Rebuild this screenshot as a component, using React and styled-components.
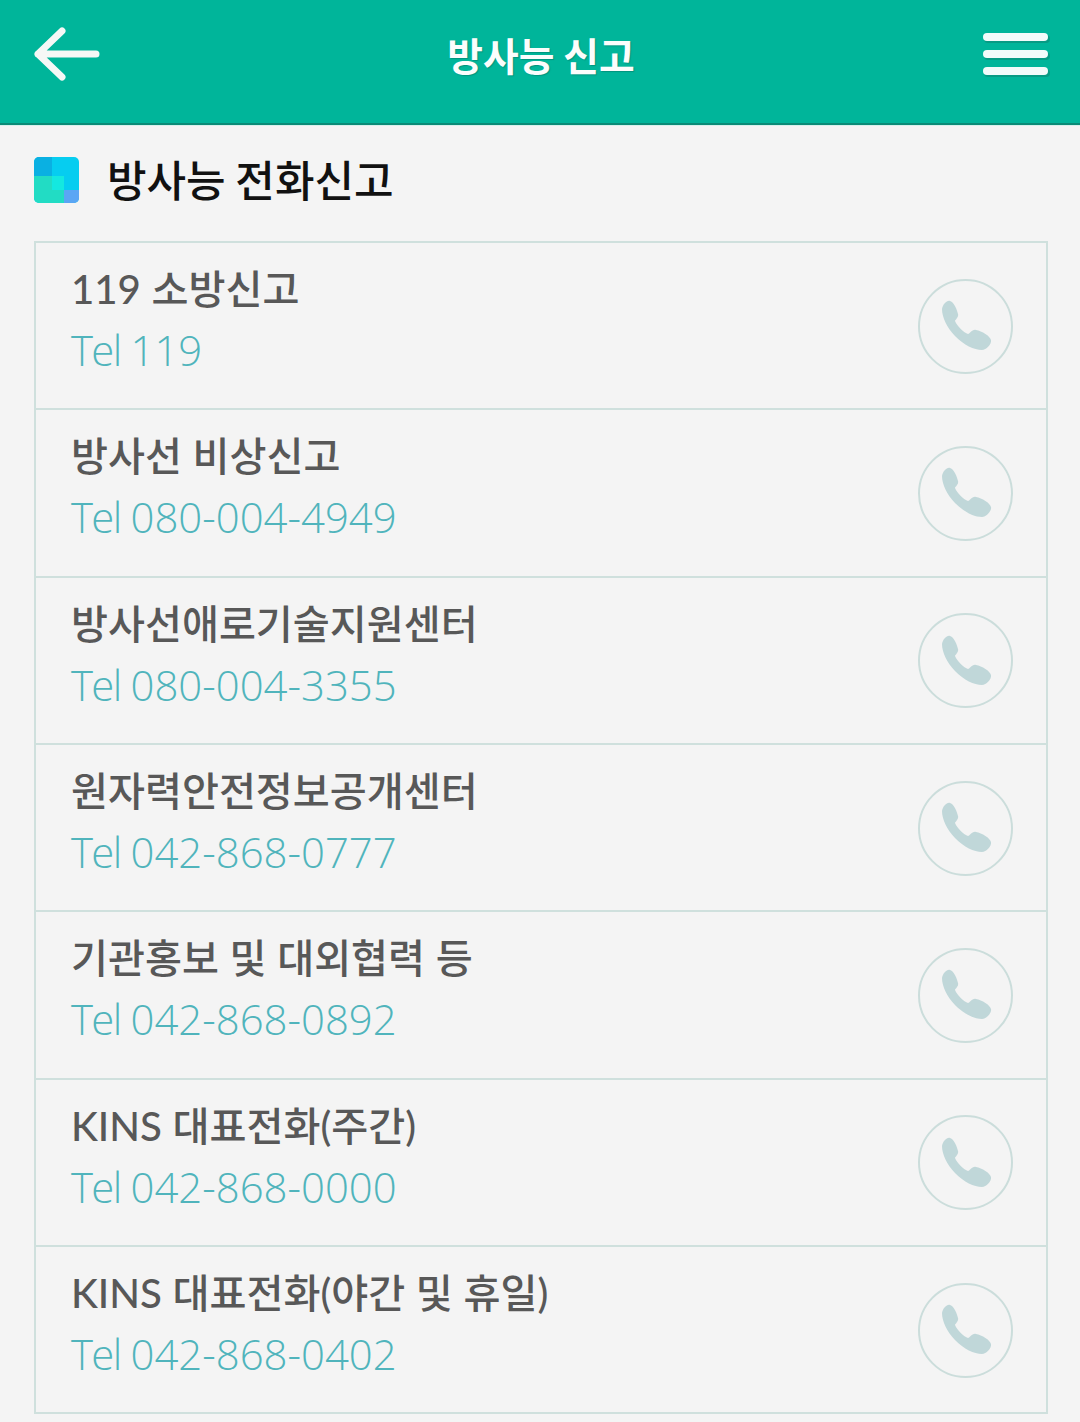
import React from 'react';
import styled, { createGlobalStyle } from 'styled-components';

const GlobalStyle = createGlobalStyle`
  html, body {
    margin: 0;
    padding: 0;
    background: #f4f4f4;
  }
  body {
    font-family: "Noto Sans CJK KR", "Noto Sans", sans-serif;
  }
`;

const Page = styled.div`
  width: 1080px;
  height: 1422px;
  overflow: hidden;
  background: #f4f4f4;
`;

const Header = styled.header`
  height: 125px;
  box-sizing: border-box;
  display: flex;
  align-items: center;
  justify-content: space-between;
  padding: 0 30px 15px 30px;
  background: #00b59a;
  border-bottom: 2px solid #0a8a76;
  box-shadow: 0 1px 0 #d8f0ec;
`;

const IconButton = styled.button`
  display: block;
  width: ${(p) => p.$w}px;
  height: 60px;
  padding: 0;
  border: 0;
  background: none;
`;

const HeaderTitle = styled.h1`
  margin: 0;
  color: #fbfdfc;
  font-size: 38.8px;
  font-weight: 700;
  line-height: 50px;
  text-shadow: 1px 1px 1px rgba(0, 90, 75, 0.35);
`;

const Section = styled.section`
  display: flex;
  align-items: center;
  gap: 28px;
  height: 116px;
  box-sizing: border-box;
  padding: 0 34px 10px;
`;

const SectionIcon = styled.svg`
  width: 45px;
  height: 46px;
  flex: none;
  margin-top: 4px;
`;

const SectionTitle = styled.h2`
  margin: 0;
  color: #111;
  font-size: 43px;
  font-weight: 500;
  line-height: 56px;
`;

const List = styled.ul`
  list-style: none;
  margin: 0 32px 0 34px;
  padding: 0;
  border: 2px solid #cfe0dd;
  border-bottom-width: 0;
`;

const Row = styled.li`
  display: flex;
  align-items: center;
  justify-content: space-between;
  height: 167.33px;
  box-sizing: border-box;
  padding: 1px 33px 0 35px;
  border-bottom: 2px solid #cfe0dd;
`;

const Texts = styled.div`
  display: flex;
  flex-direction: column;
  gap: 7px;
  padding-bottom: 13px;
`;

const Name = styled.div`
  color: #585858;
  font-family: Lato, "Noto Sans CJK KR", sans-serif;
  font-size: 40.2px;
  font-weight: 500;
  line-height: 54px;
  word-spacing: 0.5px;
`;

const Tel = styled.div`
  color: #50b4bc;
  font-family: "Open Sans", "Noto Sans", sans-serif;
  font-size: 41.9px;
  font-weight: 300;
  line-height: 54px;
`;

const TelLabel = styled.span`
  letter-spacing: -1.6px;
  margin-right: -1px;
`;

const CallButton = styled.div`
  width: 95px;
  height: 95px;
  box-sizing: border-box;
  display: flex;
  align-items: center;
  justify-content: center;
  border: 2px solid #cbdddb;
  border-radius: 50%;
`;

const PhoneIcon = styled.svg`
  width: 52px;
  height: 52px;
  fill: #c0d7d9;
`;

const contacts = [
  { name: '119 소방신고', tel: '119' },
  { name: '방사선 비상신고', tel: '080-004-4949' },
  { name: '방사선애로기술지원센터', tel: '080-004-3355' },
  { name: '원자력안전정보공개센터', tel: '042-868-0777' },
  { name: '기관홍보 및 대외협력 등', tel: '042-868-0892' },
  { name: 'KINS 대표전화(주간)', tel: '042-868-0000' },
  { name: 'KINS 대표전화(야간 및 휴일)', tel: '042-868-0402' },
];

const BackArrow = () => (
  <svg width="70" height="60" viewBox="0 0 70 60">
    <path
      d="M32 7 L8 30 L32 53 M8 30 H66"
      fill="none"
      stroke="#f6f8f6"
      strokeWidth="7"
      strokeLinecap="round"
      strokeLinejoin="round"
    />
  </svg>
);

const MenuBars = () => (
  <svg width="68" height="60" viewBox="0 0 68 60">
    <g fill="#0a8a76" opacity="0.6">
      <rect x="2" y="11" width="66" height="8" rx="4" />
      <rect x="2" y="28" width="66" height="8" rx="4" />
      <rect x="2" y="45" width="66" height="8" rx="4" />
    </g>
    <g fill="#f2fbfa">
      <rect x="1" y="9" width="65" height="8" rx="4" />
      <rect x="1" y="26" width="65" height="8" rx="4" />
      <rect x="1" y="43" width="65" height="8" rx="4" />
    </g>
  </svg>
);

const App = () => (
  <Page>
    <GlobalStyle />
    <Header>
      <IconButton $w={70}><BackArrow /></IconButton>
      <HeaderTitle>방사능 신고</HeaderTitle>
      <IconButton $w={68}><MenuBars /></IconButton>
    </Header>
    <Section>
      <SectionIcon viewBox="0 0 45 46">
        <defs>
          <clipPath id="tile">
            <rect width="45" height="46" rx="5" />
          </clipPath>
        </defs>
        <g clipPath="url(#tile)">
          <rect width="45" height="46" fill="#06cdf0" />
          <rect width="18" height="19" fill="#0ab0e2" />
          <rect y="19" width="30" height="27" fill="#22dcc4" />
          <rect x="18" y="19" width="12" height="14" fill="#14e8e0" />
          <rect x="30" y="33" width="15" height="13" fill="#5aa6f4" />
        </g>
      </SectionIcon>
      <SectionTitle>방사능 전화신고</SectionTitle>
    </Section>
    <List>
      {contacts.map((c) => (
        <Row key={c.name}>
          <Texts>
            <Name>{c.name}</Name>
            <Tel><TelLabel>Tel</TelLabel> {c.tel}</Tel>
          </Texts>
          <CallButton>
            <PhoneIcon viewBox="0 0 52 52">
              <path d="M2 9 C3 4 7 0 10 1 C13 2 16 6 18 14 C19 17 15 20 15 21 C17 26 24 33 28 34 C30 34 32 29 36 30 C42 31 50 36 51 40 C52 44 46 50 42 50 C34 50 24 45 15 36 C7 28 2 17 2 9 Z" />
            </PhoneIcon>
          </CallButton>
        </Row>
      ))}
    </List>
  </Page>
);

export default App;
